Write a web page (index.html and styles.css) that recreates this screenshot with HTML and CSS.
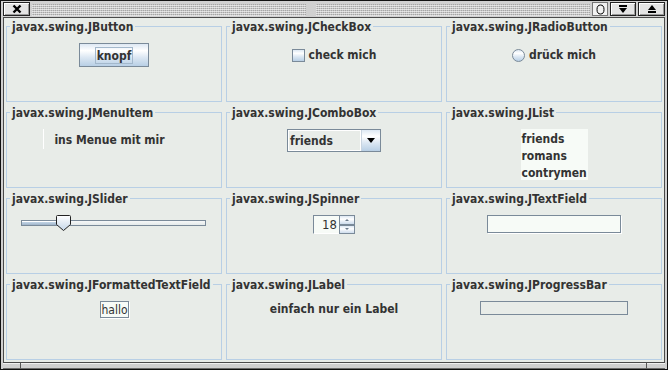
FILE: index.html
```html
<!DOCTYPE html>
<html lang="de">
<head>
    <meta charset="UTF-8">
    <meta name="viewport" content="width=device-width, initial-scale=1.0">
    <title>Swing Komponenten</title>
    <link rel="stylesheet" href="styles.css">
</head>
<body>
    <div class="window">
        <div class="titlebar">
            <div class="tb-btn close">
                <svg width="10" height="10" viewBox="0 0 10 10"><path d="M1.5 1.5 L8.5 8.5 M8.5 1.5 L1.5 8.5" stroke="#000" stroke-width="2.4"/></svg>
            </div>
            <div class="grip"></div>
            <div class="grip"></div>
            <div class="tb-btn iconify">
                <svg width="9" height="11" viewBox="0 0 9 11"><ellipse cx="4.5" cy="5.5" rx="3.5" ry="4.5" fill="none" stroke="#000" stroke-width="1"/></svg>
            </div>
            <div class="tb-btn minimize">
                <svg width="10" height="10" viewBox="0 0 10 10"><rect x="1" y="1" width="8" height="2" fill="#000"/><path d="M1 4 H9 L5 9 Z" fill="#000"/></svg>
            </div>
            <div class="tb-btn maximize">
                <svg width="10" height="10" viewBox="0 0 10 10"><path d="M5 1 L9 6 H1 Z" fill="#000"/><rect x="1" y="7" width="8" height="2" fill="#000"/></svg>
            </div>
        </div>

        <div class="content">
            <div class="grid">
                <fieldset class="cell">
                    <legend>javax.swing.JButton</legend>
                    <div class="body">
                        <button class="jbutton"><span class="focus">knopf</span></button>
                    </div>
                </fieldset>
                <fieldset class="cell">
                    <legend>javax.swing.JCheckBox</legend>
                    <div class="body">
                        <label class="check"><span class="box"></span>check mich</label>
                    </div>
                </fieldset>
                <fieldset class="cell">
                    <legend>javax.swing.JRadioButton</legend>
                    <div class="body">
                        <label class="check"><span class="box round"></span>drück mich</label>
                    </div>
                </fieldset>

                <fieldset class="cell">
                    <legend>javax.swing.JMenuItem</legend>
                    <div class="body">
                        <div class="menuitem">ins Menue mit mir</div>
                    </div>
                </fieldset>
                <fieldset class="cell">
                    <legend>javax.swing.JComboBox</legend>
                    <div class="body">
                        <div class="combo">
                            <div class="value">friends</div>
                            <div class="arrow"><span class="tri"></span></div>
                        </div>
                    </div>
                </fieldset>
                <fieldset class="cell">
                    <legend>javax.swing.JList</legend>
                    <div class="body">
                        <ul class="list">
                            <li>friends</li>
                            <li>romans</li>
                            <li>contrymen</li>
                        </ul>
                    </div>
                </fieldset>

                <fieldset class="cell">
                    <legend>javax.swing.JSlider</legend>
                    <div class="body">
                        <div class="slider">
                            <div class="track"><div class="fill" style="width: 42px"></div></div>
                            <svg class="thumb" width="15" height="16" viewBox="0 0 15 16">
                                <defs>
                                    <linearGradient id="tg" x1="0" y1="0" x2="0" y2="1">
                                        <stop offset="0" stop-color="#ffffff"/>
                                        <stop offset="1" stop-color="#c4d6e8"/>
                                    </linearGradient>
                                </defs>
                                <path d="M0.5 1.5 Q0.5 0.5 1.5 0.5 H13.5 Q14.5 0.5 14.5 1.5 V9.5 L7.5 15.5 L0.5 9.5 Z" fill="url(#tg)" stroke="#222" stroke-width="1"/>
                            </svg>
                        </div>
                    </div>
                </fieldset>
                <fieldset class="cell">
                    <legend>javax.swing.JSpinner</legend>
                    <div class="body">
                        <div class="spinner">
                            <div class="field">18</div>
                            <div class="btns">
                                <div class="sbtn up"><span class="mini up"></span></div>
                                <div class="sbtn down"><span class="mini down"></span></div>
                            </div>
                        </div>
                    </div>
                </fieldset>
                <fieldset class="cell">
                    <legend>javax.swing.JTextField</legend>
                    <div class="body">
                        <div class="textfield wide"></div>
                    </div>
                </fieldset>

                <fieldset class="cell">
                    <legend>javax.swing.JFormattedTextField</legend>
                    <div class="body">
                        <div class="textfield small">hallo</div>
                    </div>
                </fieldset>
                <fieldset class="cell">
                    <legend>javax.swing.JLabel</legend>
                    <div class="body">
                        <span class="jlabel">einfach nur ein Label</span>
                    </div>
                </fieldset>
                <fieldset class="cell">
                    <legend>javax.swing.JProgressBar</legend>
                    <div class="body">
                        <div class="progress"></div>
                    </div>
                </fieldset>
            </div>
        </div>

        <div class="resize">
            <div class="seg left"></div>
            <div class="seg mid"></div>
            <div class="seg right"></div>
        </div>
    </div>
</body>
</html>
```

FILE: styles.css
```css
body{
    margin: 0;
    background: #ffffff;
    font-family: "DejaVu Sans Condensed", "DejaVu Sans", sans-serif;
    font-stretch: semi-condensed;
    font-size: 12px;
    color: #333333;
}
.window{
    width: 668px;
    height: 370px;
    box-sizing: border-box;
    border: 1px solid #111111;
    background-color: #d0d0d0;
    padding: 0 2px;
    display: flex;
    flex-direction: column;
}

/* title bar */
.titlebar{
    height: 16px;
    display: flex;
    gap: 2px;
    padding-top: 1px;
    box-sizing: border-box;
}
.tb-btn{
    height: 14px;
    box-sizing: border-box;
    border: 1px solid #222222;
    background-color: #e4e4e4;
    box-shadow: inset 1px 1px 0 #ffffff, inset -1px -1px 0 #9a9a9a;
    display: flex;
    align-items: center;
    justify-content: center;
}
.close{
    width: 27px;
}
.iconify{
    width: 16px;
    background-color: #f2f2f2;
    border-color: #777777;
    box-shadow: none;
}
.minimize{
    width: 26px;
}
.maximize{
    width: 27px;
}
.grip{
    flex: 1;
    margin: 2px 0 1px;
    background:
        repeating-linear-gradient(90deg, rgba(255,255,255,0.35) 0 1px, transparent 1px 2px),
        repeating-linear-gradient(180deg, #a6a6a6 0 1px, #dadada 1px 2px);
}
.grip + .grip{
    margin-left: 8px;
}

/* content */
.content{
    height: 346px;
    box-sizing: border-box;
    border: 1px solid #4a4a4a;
    background-color: #e8ece8;
}
.grid{
    display: grid;
    grid-template-columns: repeat(3, 220px);
    grid-template-rows: repeat(4, 86px);
}
.cell{
    margin: 2px;
    padding: 0;
    min-width: 0;
    border: 1px solid #b8cfe5;
}
.cell legend{
    margin-left: 3px;
    padding: 1px 2px 0;
    font-weight: bold;
    line-height: 12px;
    color: #333333;
}
.body{
    display: flex;
    justify-content: center;
    align-items: flex-start;
    padding-top: 10px;
    font-weight: bold;
}

/* button */
.jbutton{
    width: 70px;
    height: 24px;
    box-sizing: border-box;
    border: 1px solid #7a8a99;
    background: linear-gradient(#dde8f3, #ffffff 30%, #dde8f3 60%, #b8cfe5);
    display: flex;
    align-items: center;
    justify-content: center;
    padding: 0;
    font: inherit;
    font-weight: bold;
    color: #333333;
}
.focus{
    border: 1px solid #a3b8cc;
    padding: 1px 1px 0;
    line-height: 14px;
}

/* checkbox / radio */
.check{
    height: 23px;
    padding-top: 1px;
    box-sizing: border-box;
    display: flex;
    align-items: center;
    gap: 4px;
}
.box{
    width: 13px;
    height: 13px;
    box-sizing: border-box;
    border: 1px solid #7a8a99;
    background: linear-gradient(#dde8f3, #ffffff 30%, #dde8f3 60%, #b8cfe5);
}
.box.round{
    border-radius: 50%;
}

/* menu item */
.menuitem{
    height: 18px;
    padding: 2px 20px 0 10px;
    line-height: 19px;
    border-left: 1px solid #ffffff;
}

/* combo */
.combo{
    width: 94px;
    height: 23px;
    box-sizing: border-box;
    border: 1px solid #7a8a99;
    display: flex;
}
.combo .value{
    flex: 1;
    padding: 2px 0 0 2px;
    line-height: 19px;
    box-shadow: inset 0 0 0 1px #ffffff;
}
.combo .arrow{
    width: 19px;
    box-sizing: border-box;
    border-left: 1px solid #c8d4e0;
    background: linear-gradient(#dde8f3, #ffffff 30%, #dde8f3 60%, #b8cfe5);
    display: flex;
    align-items: center;
    justify-content: center;
}
.tri{
    width: 0;
    height: 0;
    border-left: 4px solid transparent;
    border-right: 4px solid transparent;
    border-top: 5px solid #000000;
}

/* list */
.list{
    margin: 0;
    padding: 2px 0 0 1px;
    width: 67px;
    height: 51px;
    box-sizing: border-box;
    list-style: none;
    background-color: #f7fbf7;
    line-height: 17px;
}

/* slider */
.slider{
    position: relative;
    width: 200px;
    height: 17px;
}
.track{
    margin: 5px 0 0 7px;
    width: 185px;
    height: 6px;
    box-sizing: border-box;
    border: 1px solid #7a8a99;
    background: linear-gradient(#f6f8f8, #e4eaea);
}
.fill{
    height: 100%;
    background: linear-gradient(#ffffff 0 1px, #c4d6e8 1px, #9fb4c8);
}
.thumb{
    position: absolute;
    left: 42px;
    top: 0;
}

/* spinner */
.spinner{
    display: flex;
    height: 19px;
}
.spinner .field{
    width: 26px;
    box-sizing: border-box;
    border: 1px solid #7a8a99;
    border-right: none;
    border-bottom-color: #ffffff;
    background-color: #f7fbf7;
    text-align: right;
    padding: 1px 2px 0 0;
    font-weight: normal;
    font-size: 13px;
    line-height: 16px;
}
.btns{
    width: 16px;
    box-sizing: border-box;
    border: 1px solid #7a8a99;
    display: flex;
    flex-direction: column;
}
.sbtn{
    flex: 1;
    background: linear-gradient(#dde8f3, #ffffff 40%, #cddcec);
    display: flex;
    align-items: center;
    justify-content: center;
}
.sbtn.up{
    border-bottom: 2px solid #7a8a99;
}
.mini{
    width: 0;
    height: 0;
    border-left: 2px solid transparent;
    border-right: 2px solid transparent;
}
.mini.up{
    border-bottom: 2px solid #6b7b8b;
}
.mini.down{
    border-top: 2px solid #6b7b8b;
}

/* text fields */
.textfield{
    box-sizing: border-box;
    border: 1px solid #7a8a99;
    background-color: #f7fbf7;
    box-shadow: 1px 1px 0 #ffffff;
    font-weight: normal;
}
.textfield.wide{
    width: 134px;
    height: 18px;
}
.textfield.small{
    width: 29px;
    height: 17px;
    padding: 1px 0 0 1px;
    line-height: 14px;
}

/* label */
.jlabel{
    padding-top: 1px;
    line-height: 15px;
}

/* progress */
.progress{
    width: 148px;
    height: 14px;
    box-sizing: border-box;
    border: 1px solid #7a8a99;
    background-color: #e8ece8;
}

/* bottom resize strip */
.resize{
    flex: 1;
    display: flex;
}
.seg{
    border-bottom: 1px solid #6a6a6a;
    box-shadow: inset 0 1px 0 #f0f0f0;
}
.seg.left{
    width: 17px;
}
.seg.mid{
    flex: 1;
    border-left: 1px solid #555555;
}
.seg.right{
    width: 18px;
    border-left: 1px solid #555555;
}
```
